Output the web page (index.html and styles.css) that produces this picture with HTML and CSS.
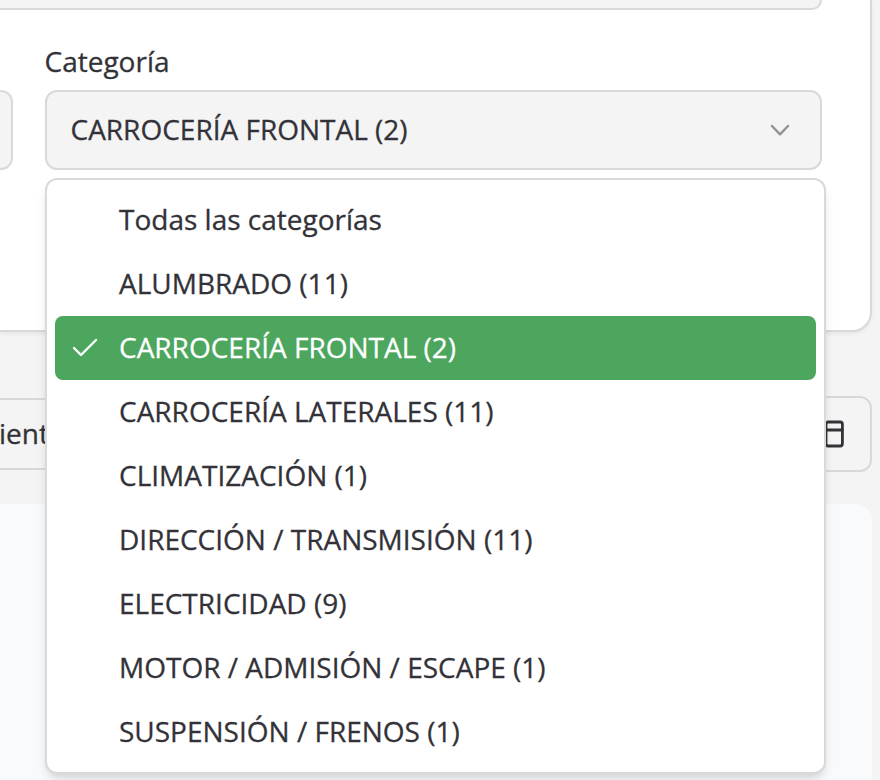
FILE: index.html
```html
<!DOCTYPE html>
<html lang="es">
<head>
<meta charset="utf-8">
<title>Categoría</title>
<link rel="stylesheet" href="styles.css">
</head>
<body>
<main class="page">
  <section class="card">
    <div class="field-end"></div>
    <div class="filters">
      <div class="field-side"></div>
      <div class="field">
        <label class="label">Categoría</label>
        <div class="select">
          <span>CARROCERÍA FRONTAL (2)</span>
          <svg class="chevron" width="32" height="32" viewBox="0 0 32 32"><path d="M8 12 16 20.3 24 12"/></svg>
        </div>
        <ul class="menu">
          <li class="option">Todas las categorías</li>
          <li class="option">ALUMBRADO (11)</li>
          <li class="option selected"><svg class="check" width="32" height="32" viewBox="0 0 32 32"><path d="M5 16 12 23 27 8"/></svg>CARROCERÍA FRONTAL (2)</li>
          <li class="option">CARROCERÍA LATERALES (11)</li>
          <li class="option">CLIMATIZACIÓN (1)</li>
          <li class="option">DIRECCIÓN / TRANSMISIÓN (11)</li>
          <li class="option">ELECTRICIDAD (9)</li>
          <li class="option">MOTOR / ADMISIÓN / ESCAPE (1)</li>
          <li class="option">SUSPENSIÓN / FRENOS (1)</li>
        </ul>
      </div>
    </div>
  </section>
  <div class="toolbar">
    <div class="sort">ient</div>
    <div class="view">
      <svg class="layout" width="32" height="32" viewBox="0 0 32 32"><rect x="12" y="4" width="16.4" height="24" rx="2.2"/><path d="M12 12H28.4"/></svg>
    </div>
  </div>
  <section class="panel"></section>
</main>
</body>
</html>
```

FILE: styles.css
```css
* { box-sizing: border-box; }

body {
  margin: 0;
  background: #f4f4f4;
  color: #323238;
  font: 28px/40px "Open Sans", sans-serif;
  -webkit-text-stroke: .3px currentColor;
}

svg { fill: none; stroke-linecap: round; stroke-linejoin: round; }

.page {
  width: 880px;
  height: 780px;
  overflow: hidden;
  padding-right: 8px;
  display: flex;
  flex-direction: column;
}

.card {
  height: 332px;
  flex: none;
  background: #fff;
  border: 2px solid #d9d9d9;
  border-width: 0 2px 2px 0;
  border-radius: 0 0 20px 0;
  box-shadow: 0 2px 4px rgba(0, 0, 0, .06);
}

.field-end {
  width: 822px;
  height: 10px;
  background: #f4f4f4;
  border: 2px solid #d9d9d9;
  border-width: 0 2px 2px 0;
  border-radius: 0 0 12px 0;
}

.filters {
  display: grid;
  grid-template-columns: 13px 777px;
  column-gap: 32px;
  padding-top: 31px;
}

.field-side {
  height: 80px;
  margin-top: 49px;
  background: #f4f4f4;
  border: 2px solid #d9d9d9;
  border-left: 0;
  border-radius: 0 12px 12px 0;
}

.field { position: relative; }

.label { display: block; margin: 0 0 9px -.5px; }

.select {
  height: 80px;
  padding: 0 24px 0 23.5px;
  display: flex;
  align-items: center;
  justify-content: space-between;
  background: #f4f4f4;
  border: 2px solid #d9d9d9;
  border-radius: 12px;
}

.select span { padding-bottom: 2px; }

.chevron { stroke: #949494; stroke-width: 2.5; }

.menu {
  position: absolute;
  z-index: 1;
  top: 137px;
  left: 0;
  width: 781px;
  margin: 0;
  padding: 8px;
  list-style: none;
  background: #fff;
  border: 2px solid #d9d9d9;
  border-radius: 12px;
  box-shadow: 0 8px 12px -2px rgba(0, 0, 0, .1), 0 4px 8px -4px rgba(0, 0, 0, .1);
}

.option {
  height: 64px;
  padding: 0 0 2px 64px;
  display: flex;
  align-items: center;
  border-radius: 8px;
}

.selected {
  padding-left: 14px;
  background: #4ca65e;
  color: #fff;
}

.check { margin: 2px 18px 0 0; stroke: #fff; stroke-width: 2.4; }

.toolbar {
  margin-top: 64px;
  height: 76px;
  flex: none;
  display: flex;
  align-items: center;
  justify-content: space-between;
}

.sort {
  width: 140px;
  height: 72px;
  line-height: 66px;
  text-indent: -1px;
  border: 2px solid #d9d9d9;
  border-left: 0;
  border-radius: 0 12px 12px 0;
}

.view {
  width: 76px;
  height: 76px;
  padding-right: 24px;
  display: flex;
  align-items: center;
  justify-content: flex-end;
  border: 2px solid #d9d9d9;
  border-radius: 12px;
}

.layout { stroke: #323238; stroke-width: 2.8; }

.panel {
  margin-top: 32px;
  flex: 1;
  background: #f9fafc;
  border-radius: 0 16px 0 0;
}
```
